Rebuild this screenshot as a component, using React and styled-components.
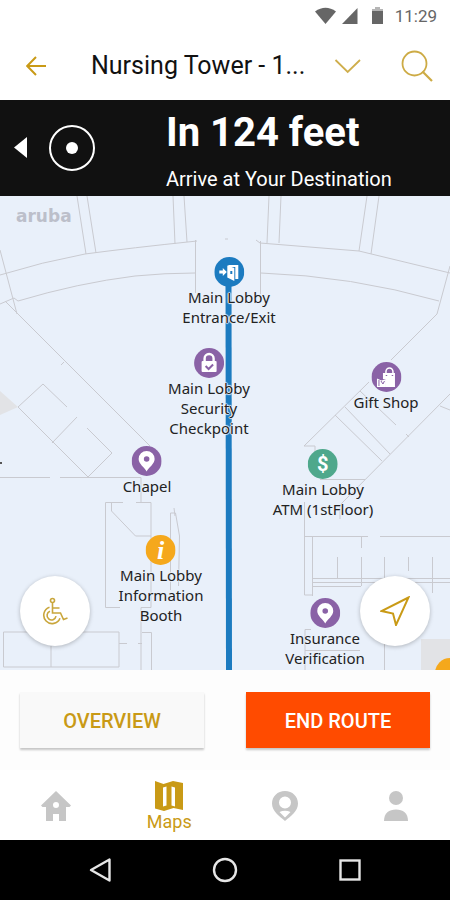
import React, { useState } from "react";
import styled, { createGlobalStyle, css } from "styled-components";

const GOLD = "#c99a16";
const PURPLE = "#8a62a6";

const places = [
  { id: "entrance", label: "Main Lobby\nEntrance/Exit", x: 229, y: 76, color: "#1c7bc0", icon: "door" },
  { id: "security", label: "Main Lobby\nSecurity\nCheckpoint", x: 209, y: 167, color: PURPLE, icon: "lock" },
  { id: "gift", label: "Gift Shop", x: 386, y: 181, color: PURPLE, icon: "gift" },
  { id: "chapel", label: "Chapel", x: 147, y: 265, color: PURPLE, icon: "pin" },
  { id: "atm", label: "Main Lobby\nATM (1stFloor)", x: 323, y: 268, color: "#4fa88c", icon: "dollar" },
  { id: "info", label: "Main Lobby\nInformation\nBooth", x: 161, y: 354, color: "#f5a81c", icon: "info" },
  { id: "insurance", label: "Insurance\nVerification", x: 325, y: 417, color: PURPLE, icon: "pin" },
];

const tabs = [
  { id: "home", name: "Home" },
  { id: "maps", name: "Maps" },
  { id: "nearby", name: "Nearby" },
  { id: "profile", name: "Profile" },
];

function App() {
  const [activeTab, setActiveTab] = useState("maps");

  return (
    <>
      <GlobalStyle />
      <Screen>
        <StatusBar>
          <StatusIcons />
          <time>11:29</time>
        </StatusBar>

        <AppBar>
          <IconButton aria-label="Back">
            <svg width="20" height="20" viewBox="0 0 20 20" fill="none" stroke={GOLD} strokeWidth="2">
              <path d="M20 10H1.5M10 1L1.2 10l8.8 9" />
            </svg>
          </IconButton>
          <Title>Nursing Tower - 1...</Title>
          <IconButton aria-label="Change floor">
            <svg width="28" height="16" viewBox="0 0 28 16" fill="none" stroke="#cfae4c" strokeWidth="1.8">
              <path d="M1.500 2l12.200 12L26 2" />
            </svg>
          </IconButton>
          <IconButton aria-label="Search">
            <svg width="32" height="32" viewBox="0 0 32 32" fill="none" stroke="#cdab45" strokeWidth="1.8">
              <circle cx="13.500" cy="13.500" r="12" />
              <path d="M21.500 21.500L31 31" strokeWidth="2.200" />
            </svg>
          </IconButton>
        </AppBar>

        <Banner>
          <BannerIcons>
            <IconButton aria-label="Previous step">
              <svg width="14" height="22" viewBox="0 0 14 22" fill="#fff">
                <path d="M13 0v21L0 10.500z" />
              </svg>
            </IconButton>
            <svg width="46" height="46" viewBox="0 0 46 46" aria-hidden="true">
              <circle cx="23" cy="23" r="22" fill="none" stroke="#fff" strokeWidth="2" />
              <circle cx="23" cy="23" r="6" fill="#fff" />
            </svg>
          </BannerIcons>
          <div>
            <Distance>In 124 feet</Distance>
            <Instruction>Arrive at Your Destination</Instruction>
          </div>
        </Banner>

        <MapArea>
          <FloorPlan />
          <MapBrand>aruba</MapBrand>
          {places.map((place) => (
            <Place key={place.id} style={{ left: `${(place.x / 450) * 100}%`, top: place.y }}>
              <PlaceIcon color={place.color} type={place.icon} />
              <PlaceLabel>{place.label}</PlaceLabel>
            </Place>
          ))}
          <RoundButton $side="left" aria-label="Accessible route">
            <svg width="28" height="28" viewBox="0 0 28 28" fill="none" stroke="#c9a63c" strokeWidth="1.600">
              <circle cx="11.500" cy="3.500" r="2" />
              <path d="M11.500 6v10h8l3 6.500 4-1.500M11.500 11h7" />
              <path d="M8.500 10.200a8.400 8.400 0 1 0 10.500 11" />
              <path d="M9 14.200a4.500 4.500 0 1 0 6 5" />
            </svg>
          </RoundButton>
          <RoundButton $side="right" aria-label="My location">
            <svg width="30" height="30" viewBox="0 0 30 30" fill="none" stroke={GOLD} strokeWidth="2">
              <path d="M28.500 1.500L1.500 15l11.500 2.500 3 11.500z" />
            </svg>
          </RoundButton>
        </MapArea>

        <Actions>
          <ActionButton>OVERVIEW</ActionButton>
          <ActionButton $primary>END ROUTE</ActionButton>
        </Actions>

        <TabBar>
          {tabs.map((tab) => (
            <Tab
              key={tab.id}
              aria-label={tab.name}
              $active={activeTab === tab.id}
              onClick={() => setActiveTab(tab.id)}
            >
              <TabIcon type={tab.id} />
              {activeTab === tab.id && <span>{tab.name}</span>}
            </Tab>
          ))}
        </TabBar>

        <SystemBar>
          <IconButton aria-label="System back">
            <svg width="24" height="26" viewBox="0 0 24 26" fill="none" stroke="#e6e6e6" strokeWidth="2.400">
              <path d="M21.500 2.500v21L3 13z" strokeLinejoin="round" />
            </svg>
          </IconButton>
          <IconButton aria-label="System home">
            <svg width="26" height="26" viewBox="0 0 26 26" fill="none" stroke="#e6e6e6" strokeWidth="2.400">
              <circle cx="13" cy="13" r="11" />
            </svg>
          </IconButton>
          <IconButton aria-label="Recent apps">
            <svg width="22" height="22" viewBox="0 0 22 22" fill="none" stroke="#e6e6e6" strokeWidth="2.400">
              <rect x="1.500" y="1.500" width="19" height="19" />
            </svg>
          </IconButton>
        </SystemBar>
      </Screen>
    </>
  );
}

export default App;

function StatusIcons() {
  return (
    <svg width="70" height="18" viewBox="0 0 70 18" fill="#666" aria-hidden="true">
      <path d="M0 4.500Q10.500-3 21 4.500L10.500 17z" />
      <path d="M42.500 1v16H27z" />
      <path d="M60 0h5v2h3v15H57V2h3z" />
      <path d="M60 0h5v2h3v2H57V2h3z" fill="#b5b5b5" />
    </svg>
  );
}

function FloorPlan() {
  return (
    <PlanSvg viewBox="0 0 450 474" preserveAspectRatio="none" aria-hidden="true">
      <g fill="#e2e3e6">
        <path d="M0 195l18 16-18 8z" />
        <path d="M421 443h29v31h-29z" />
      </g>
      <g fill="none" stroke="#c9cad0" strokeWidth="1">
        {/* corridors along the top */}
        <path d="M77 0l9 58M87 0l9 57M173 0l2 48M184 0l3 46" />
        <path d="M269 0l-2 47M281 0l-2 47M367 0l-8 55M379 0l-8 58" />
        <path d="M0 79q42-13 85-21 45-6 112-13M195.500 44v53" />
        <path d="M0 108l14-6 4 3q60-18 117-25 30-3 60-3" />
        <path d="M256 44l4 3 99 8 91 22M260.500 45v53M261 77q90 3 178 28M225 43h3" />
        <path d="M0 54l17 64M450 70l-13 48-46 46" />
        {/* left wing */}
        <path d="M5 105l145 145M64 166l-3 3" />
        <path d="M67 211L43 188l-25 23 70 70 24-24-25-25M52 247l25-26" />
        <path d="M0 281.500h50M60 281.500h81v25" />
        <path d="M123 306.500h-17.500v105H120M111.500 306v9l24 25H151M136 306.500h15v105h-10v63" />
        <path d="M174 312l1 8M170.500 394v-77h5l4 23-1 50" />
        <path d="M3.500 471v-35H119v35zM51 450v21M119 447.500h8M138 447.500h4M142 436.500h9.500V474" />
        {/* right wing */}
        <path d="M369 186l-65 64h11v30M335 219l47 46M345 211l45 47M360 195l36 34" />
        <path d="M450 198L340 309v14M440 210l10 4M406 238l3 3" />
        <path d="M320 283.500h45M304.500 306v93h8M304 340.500h64M380 340.500h70" />
        <path d="M312.500 340v60M361.500 340v12" />
        <path d="M312 382.500h138M312 386.500h138M312 390.500h49" />
        <path d="M337.500 361v21M361.500 361v29M384.500 361v24M408.500 361v14M432.500 361v36" />
        <path d="M311 433.500h-6V474M305 454.500h55M384.500 448v26" />
      </g>
      <path d="M0 267h2" stroke="#555" strokeWidth="2" />
      <path d="M228.500 76L229 474" stroke="#1c7bc0" strokeWidth="6" fill="none" />
      <circle cx="450" cy="477" r="15" fill="#f5a81c" />
    </PlanSvg>
  );
}

function PlaceIcon({ color, type }) {
  return (
    <svg width="30" height="30" viewBox="0 0 30 30" aria-hidden="true">
      <circle cx="15" cy="15" r="15" fill={color} />
      {type === "door" && (
        <g fill="#fff">
          <path d="M14 8h10v14h-3V10h-7z" />
          <path d="M13 8.500l7 2.500v13l-7-3.500z" />
          <path d="M5 13.500h3.500V11l4 4-4 4v-2.500H5z" />
          <path d="M16 14h2v3h-2z" fill={color} />
        </g>
      )}
      {type === "lock" && (
        <>
          <path d="M10.500 14v-3.500a4.500 4.500 0 0 1 9 0V14" fill="none" stroke="#fff" strokeWidth="2.400" />
          <rect x="7.500" y="13" width="15" height="11" rx="1" fill="#fff" />
          <path d="M11.500 18l3 3 4.500-4.500" fill="none" stroke={color} strokeWidth="2" />
        </>
      )}
      {type === "gift" && (
        <>
          <path d="M14.500 12V9.500a3.500 3.500 0 0 1 7 0V12" fill="none" stroke="#fff" strokeWidth="1.500" />
          <path d="M11.500 11h12v14h-9v-8h-3z" fill="#fff" />
          <path d="M5.500 16.500l4.500 2 4.500-1.500v8h-9z" fill="#fff" />
          <path d="M7.500 18v6M9.500 19l2 3 1.500-3" stroke={color} fill="none" />
          <path d="M15 13v1M21 13v1" stroke={color} strokeWidth="1.500" />
        </>
      )}
      {type === "pin" && (
        <>
          <path d="M15 25.500c-2-4-8-7.500-8-12.500a8 8 0 0 1 16 0c0 5-6 8.500-8 12.500z" fill="#fff" />
          <circle cx="15" cy="13" r="2.800" fill={color} />
        </>
      )}
      {type === "dollar" && (
        <PinGlyph x="15" y="22">
          $
        </PinGlyph>
      )}
      {type === "info" && (
        <PinGlyph $serif x="15" y="24">
          i
        </PinGlyph>
      )}
    </svg>
  );
}

function TabIcon({ type }) {
  return (
    <svg width="32" height="32" viewBox="0 0 32 32" fill="currentColor" aria-hidden="true">
      {type === "home" && (
        <path
          fillRule="evenodd"
          d="M16 1l15 14.500-1.500 1.500H26v14h-7v-7h-6v7H6V17H2.500L1 15.500zM16 12a3 3 0 1 0 0 6 3 3 0 0 0 0-6z"
        />
      )}
      {type === "maps" && (
        <path
          fillRule="evenodd"
          d="M2 1l8.500 3L20 1l10 2v27l-9.500-2L11 31l-9-2.500zM10 7.500v19l3.500-1V6.500zM18.500 6.500v19l3.500 1v-19z"
        />
      )}
      {type === "nearby" && (
        <path
          fillRule="evenodd"
          d="M16 1C8.500 1 3 6.500 3 13.500 3 21 10 26 16 31c6-5 13-10 13-17.500C29 6.500 23.500 1 16 1zM16 6.500a6 6 0 1 1 0 12 6 6 0 0 1 0-12zM10.500 22q5.500-2.500 11 0L16 27.500z"
        />
      )}
      {type === "profile" && (
        <>
          <circle cx="16" cy="8" r="7" />
          <path d="M4 31c0-8 5-11.500 12-11.500S28 23 28 31z" />
        </>
      )}
    </svg>
  );
}

const GlobalStyle = createGlobalStyle`
  * {
    box-sizing: border-box;
  }
  body {
    margin: 0;
    background: #fff;
    font-family: Roboto, "Liberation Sans", sans-serif;
  }
  button {
    font-family: inherit;
    border: 0;
    cursor: pointer;
  }
  svg {
    display: block;
  }
`;

const Screen = styled.div`
  display: flex;
  flex-direction: column;
  min-height: 100vh;
`;

const StatusBar = styled.div`
  display: flex;
  align-items: center;
  justify-content: flex-end;
  gap: 10px;
  height: 32px;
  padding: 0 13px;
  color: #666;
  font-size: 17px;
  line-height: 32px;
`;

const AppBar = styled.header`
  display: grid;
  grid-template-columns: 65px 1fr 67px 32px;
  align-items: center;
  height: 68px;
  padding: 0 17px 0 26px;
`;

const IconButton = styled.button`
  justify-self: start;
  padding: 0;
  background: none;
`;

const Title = styled.h1`
  margin: 0;
  color: #111;
  font-size: 25px;
  font-weight: 400;
  line-height: 32px;
  white-space: nowrap;
  overflow: hidden;
  text-overflow: ellipsis;
`;

const Banner = styled.section`
  display: grid;
  grid-template-columns: 166px 1fr;
  height: 96px;
  background: #111;
  color: #fff;
`;

const BannerIcons = styled.div`
  display: flex;
  align-items: center;
  gap: 21px;
  padding-left: 14px;
`;

const Distance = styled.h2`
  margin: 9px 0 10px;
  font-size: 40px;
  font-weight: 700;
  line-height: 48px;
`;

const Instruction = styled.p`
  margin: 0;
  font-size: 20px;
  line-height: 24px;
`;

const MapArea = styled.main`
  position: relative;
  flex: 1;
  min-height: 474px;
  overflow: hidden;
  background: #e9f0fa;
`;

const PlanSvg = styled.svg`
  width: 100%;
  height: 474px;
`;

const MapBrand = styled.span`
  position: absolute;
  top: 8px;
  left: 16px;
  color: #bcbfca;
  font-family: "DejaVu Sans", sans-serif;
  font-size: 17px;
  font-weight: 700;
  line-height: 24px;
`;

const Place = styled.div`
  position: absolute;
  display: flex;
  flex-direction: column;
  align-items: center;
  margin-top: -15px;
  transform: translateX(-50%);
`;

const PlaceLabel = styled.span`
  color: #222;
  font-family: "Noto Sans", "Open Sans", sans-serif;
  font-size: 15px;
  line-height: 20px;
  text-align: center;
  white-space: pre;
  text-shadow: 0 0 1px #e9f0fa, 1px 0 1px #e9f0fa, -1px 0 1px #e9f0fa, 0 1px 1px #e9f0fa, 0 -1px 1px #e9f0fa;
`;

const PinGlyph = styled.text`
  fill: #fff;
  font-family: Roboto, sans-serif;
  font-size: 20px;
  font-weight: 700;
  text-anchor: middle;

  ${(props) =>
    props.$serif &&
    css`
      font-family: "Liberation Serif", serif;
      font-size: 26px;
      font-style: italic;
    `}
`;

const RoundButton = styled.button`
  position: absolute;
  bottom: 24px;
  ${(props) => props.$side}: 20px;
  display: flex;
  align-items: center;
  justify-content: center;
  width: 70px;
  height: 70px;
  padding: 0;
  border-radius: 50%;
  background: #fff;
  box-shadow: 0 1px 4px rgba(0, 0, 0, 0.25);
`;

const Actions = styled.div`
  display: flex;
  gap: 42px;
  padding: 22px 20px;
  background: #fdfdfd;
`;

const ActionButton = styled.button`
  flex: 1;
  height: 56px;
  padding: 2px 0 0;
  background: ${(props) => (props.$primary ? "#ff4b00" : "#f9f9f9")};
  color: ${(props) => (props.$primary ? "#fff" : GOLD)};
  font-size: 20px;
  font-weight: 500;
  box-shadow: 0 2px 2px rgba(0, 0, 0, 0.22);
`;

const TabBar = styled.nav`
  display: grid;
  grid-template-columns: 28fr 29fr 29fr 27fr;
  height: 70px;
  background: #fff;
`;

const Tab = styled.button`
  display: flex;
  flex-direction: column;
  align-items: center;
  justify-content: center;
  padding: 2px 0 0;
  background: none;
  color: ${(props) => (props.$active ? GOLD : "#c6c6c6")};
  font-size: 18px;
  line-height: 20px;
`;

const SystemBar = styled.div`
  display: grid;
  grid-template-columns: repeat(3, 1fr);
  align-items: center;
  height: 60px;
  padding: 0 38px;
  background: #000;

  ${IconButton} {
    justify-self: center;
  }
`;
